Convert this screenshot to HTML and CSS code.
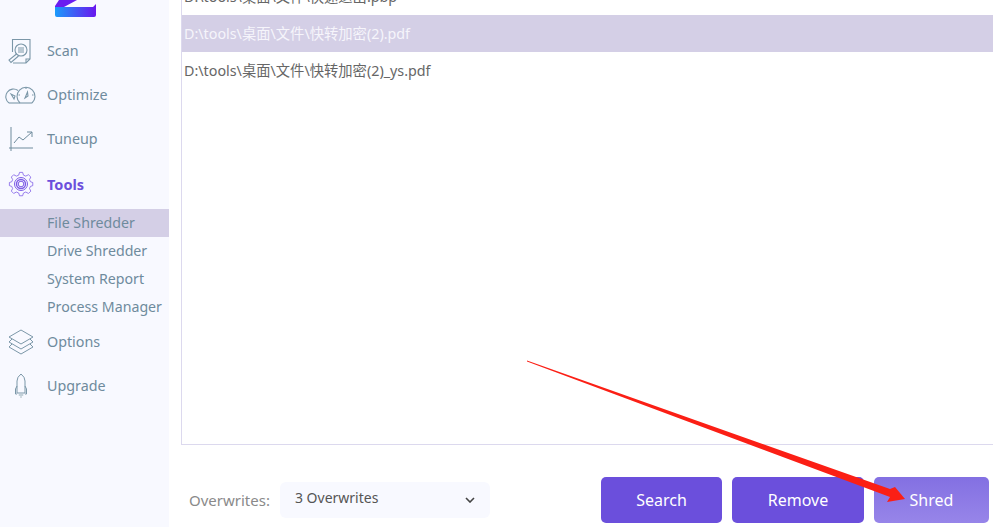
FILE: index.html
```html
<!DOCTYPE html>
<html lang="en">
<head>
    <meta charset="UTF-8">
    <meta name="viewport" content="width=device-width, initial-scale=1.0">
    <title>File Shredder</title>
    <link rel="stylesheet" href="styles.css">
</head>
<body>
    <div class="app">
        <aside class="sidebar">
            <div class="logo">
                <svg width="42" height="17" viewBox="0 0 42 17">
                    <defs>
                        <linearGradient id="logoGrad" x1="0" x2="1" y1="0" y2="0">
                            <stop offset="0" stop-color="#1a9bfb"/>
                            <stop offset="1" stop-color="#6a17ee"/>
                        </linearGradient>
                    </defs>
                    <path d="M0 6 L4 0 L22 0 L9 7 L0 7 Z" fill="#6a1cf0"/>
                    <path d="M0 7 L38 7 L41 4 L41 15 Q41 17 39 17 L2 17 Q0 17 0 15 Z" fill="url(#logoGrad)"/>
                </svg>
            </div>
            <nav>
                <a class="nav-item">
                    <svg class="nav-icon" viewBox="0 0 32 28" fill="none" stroke="#7b97a8" stroke-width="1.1">
                        <path d="M7.5 16 V3.5 H25 V23 L21 27 H8"/>
                        <path d="M25 23 H21 V27"/>
                        <circle cx="16" cy="14" r="6"/>
                        <path d="M13 12 H19 M13 14 H19 M13 16 H19"/>
                        <path d="M11.5 18 L4 24 L6 26.5 L13.5 20"/>
                    </svg>
                    <span>Scan</span>
                </a>
                <a class="nav-item">
                    <svg class="nav-icon" viewBox="0 0 32 28" fill="none" stroke="#7b97a8" stroke-width="1.1">
                        <path d="M4 23 A7.5 7.5 0 0 1 13 10.5"/>
                        <path d="M4 23 H27"/>
                        <path d="M15 23 A9 9 0 1 1 27 23"/>
                        <path d="M21 7 V9 M13.5 15 H15 M27 15 H28.5 M22.5 12 L20 18 L23 16 Z M6 14 L9 19 L10 16 Z"/>
                    </svg>
                    <span>Optimize</span>
                </a>
                <a class="nav-item">
                    <svg class="nav-icon" viewBox="0 0 32 28" fill="none" stroke="#6f8b9d" stroke-width="1">
                        <path d="M6 3 V27 M4 24 H28"/>
                        <path d="M9 19 L14 13 L18 16 L27 8"/>
                        <path d="M22 8 H27 V13"/>
                    </svg>
                    <span>Tuneup</span>
                </a>
                <a class="nav-item nav-item-open">
                    <svg class="nav-icon" viewBox="0 0 32 28" fill="none" stroke="#7d5ce6" stroke-width="1" stroke-linejoin="round">
                        <path d="M18 1 L19 4.5 L22 5.8 L25.5 4 L28.5 7 L26.8 10.3 L28 13 L31 14 V18 L28 19 L26.8 21.7 L28.5 25 L25.5 28 L22 26.2 L19 27.5 L18 31 H14 L13 27.5 L10 26.2 L6.5 28 L3.5 25 L5.2 21.7 L4 19 L1 18 V14 L4 13 L5.2 10.3 L3.5 7 L6.5 4 L10 5.8 L13 4.5 L14 1 Z" transform="translate(3.6 1.6) scale(.78)"/>
                        <circle cx="16" cy="14" r="6.5"/>
                        <circle cx="16" cy="14" r="4.5" stroke-width="1.4"/>
                        <circle cx="16" cy="14" r="2.8"/>
                    </svg>
                    <span>Tools</span>
                </a>
                <div class="subnav">
                    <a class="sub-item sub-item-active">File Shredder</a>
                    <a class="sub-item">Drive Shredder</a>
                    <a class="sub-item">System Report</a>
                    <a class="sub-item">Process Manager</a>
                </div>
                <a class="nav-item">
                    <svg class="nav-icon" viewBox="0 0 32 28" fill="none" stroke="#7b97a8" stroke-width="1">
                        <path d="M16 3 L28 10 L16 17 L4 10 Z"/>
                        <path d="M7 12 L4 15 L16 22 L28 15 L25 12"/>
                        <path d="M7 17 L4 20 L16 27 L28 20 L25 17"/>
                    </svg>
                    <span>Options</span>
                </a>
                <a class="nav-item">
                    <svg class="nav-icon" viewBox="0 0 32 28" fill="none" stroke="#7b97a8" stroke-width="1">
                        <path d="M12 22 V10 Q12 6 16 3 Q20 6 20 10 V22 Z"/>
                        <path d="M12 15 L10.5 18 V23 H12 M20 15 L21.5 18 V23 H20"/>
                        <path d="M14.5 23 V25 M17.5 23 V25 M16 23 V27" stroke="#c3d0d8" stroke-width="1.5"/>
                    </svg>
                    <span>Upgrade</span>
                </a>
            </nav>
        </aside>

        <main class="main">
            <div class="file-list">
                <div class="file-row file-row-cut">D:\tools\桌面\文件\快速退出.pbp</div>
                <div class="file-row file-row-selected">D:\tools\桌面\文件\快转加密(2).pdf</div>
                <div class="file-row">D:\tools\桌面\文件\快转加密(2)_ys.pdf</div>
            </div>
            <div class="toolbar">
                <label class="overwrites-label">Overwrites:</label>
                <div class="select">
                    <span class="select-value">3 Overwrites</span>
                    <svg width="10" height="6" viewBox="0 0 10 6" fill="none" stroke="#444" stroke-width="1.6">
                        <path d="M1 1 L5 5 L9 1"/>
                    </svg>
                </div>
                <div class="buttons">
                    <button class="btn btn-search">Search</button>
                    <button class="btn btn-remove">Remove</button>
                    <button class="btn btn-shred">Shred</button>
                </div>
            </div>
        </main>

        <!-- red annotation arrow on top of the screenshot -->
        <svg class="annotation" width="993" height="527" viewBox="0 0 993 527">
            <path d="M527 360.5 L890 489 L895 487 L905 499 L887 502 L890 497 L527 361.5 Z" fill="#fb1f15"/>
        </svg>
    </div>
</body>
</html>
```

FILE: styles.css
```css
* {
    box-sizing: border-box;
}

html, body {
    margin: 0;
    padding: 0;
    height: 100%;
    overflow: hidden;
}

body {
    font-family: "Noto Sans", "Noto Sans CJK SC", sans-serif;
    background-color: white;
}

.app {
    position: relative;
    display: flex;
    width: 993px;
    height: 527px;
    overflow: hidden;
}

.sidebar {
    flex: 0 0 169px;
    background-color: #f8f9ff;
}

.logo {
    height: 28px;
    padding-left: 55px;
}

.logo svg {
    display: block;
}

.nav-item {
    display: flex;
    align-items: center;
    height: 44px;
    padding-left: 5px;
    color: #6f8b9d;
    font-size: 14.3px;
}

.nav-icon {
    flex: 0 0 32px;
    width: 32px;
    height: 28px;
    margin-right: 10px;
}

.nav-item-open {
    height: 49px;
    padding-bottom: 2px;
    color: #6c4fdc;
    font-weight: 700;
    font-size: 14.5px;
}

.subnav {
    margin-bottom: -2px;
}

.sub-item {
    display: block;
    height: 28px;
    line-height: 27px;
    padding-left: 47px;
    color: #6f8b9d;
    font-size: 14.2px;
}

.sub-item-active {
    background-color: #d4cfe6;
}

.main {
    flex: 1;
    display: flex;
    flex-direction: column;
    min-width: 0;
    padding-left: 12px;
}

.file-list {
    height: 467px;
    margin-top: -22px;
    flex: none;
    border-left: 1px solid #dcd9ee;
    border-bottom: 1px solid #dcd9ee;
    overflow: hidden;
}

.file-row {
    height: 37px;
    line-height: 37px;
    padding-left: 2px;
    color: #666;
    font-size: 14.3px;
    white-space: nowrap;
}

.file-row-selected {
    background-color: #d4cfe6;
    color: #f6f5fb;
}

.toolbar {
    display: flex;
    align-items: center;
    padding: 32px 4px 0 8px;
}

.overwrites-label {
    color: #8a8a8a;
    font-size: 15px;
    margin-right: 10px;
}

.select {
    display: flex;
    align-items: center;
    justify-content: space-between;
    width: 210px;
    height: 36px;
    padding: 0 15px;
    border-radius: 6px;
    background-color: #f8f9ff;
    color: #555;
    font-size: 14px;
}

.select-value {
    margin-top: -5px;
}

.buttons {
    display: flex;
    gap: 10px;
    margin-left: auto;
}

.btn {
    height: 46px;
    border: none;
    border-radius: 5px;
    background-color: #6b4fdc;
    color: white;
    font-family: inherit;
    font-size: 16px;
}

.btn-search {
    width: 121px;
}

.btn-remove {
    width: 132px;
}

.btn-shred {
    width: 115px;
    background: linear-gradient(#8370e2, #9785e9);
}

.annotation {
    position: absolute;
    top: 0;
    left: 0;
    pointer-events: none;
}
```
